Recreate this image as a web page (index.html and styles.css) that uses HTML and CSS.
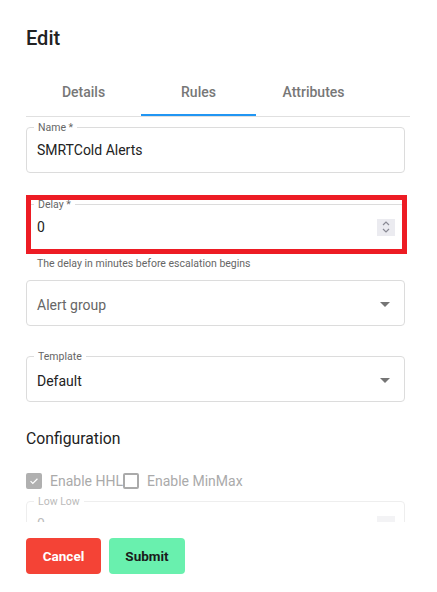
FILE: index.html
```html
<!DOCTYPE html>
<html lang="en">
<head>
  <meta charset="UTF-8">
  <title>Edit</title>
  <link rel="stylesheet" href="styles.css">
</head>
<body>
  <div class="dialog">
    <h2 class="dialog-title">Edit</h2>

    <div class="tabs">
      <div class="tab">Details</div>
      <div class="tab active">Rules</div>
      <div class="tab">Attributes</div>
    </div>

    <div class="dialog-content">
      <div class="field first">
        <span class="field-label">Name *</span>
        <span class="field-value">SMRTCold Alerts</span>
      </div>

      <div class="field delay">
        <span class="field-label">Delay *</span>
        <span class="field-value">0</span>
        <span class="spinner">
          <svg width="10" height="14" viewBox="0 0 10 14"><path d="M2 5l3-3 3 3M2 9l3 3 3-3" fill="none" stroke="#8a8a94" stroke-width="1.2"/></svg>
        </span>
        <span class="highlight"></span>
      </div>
      <div class="helper">The delay in minutes before escalation begins</div>

      <div class="field tight">
        <span class="field-value select placeholder">Alert group</span>
        <span class="arrow"></span>
      </div>

      <div class="field">
        <span class="field-label">Template</span>
        <span class="field-value select">Default</span>
        <span class="arrow"></span>
      </div>

      <h3 class="section-title">Configuration</h3>

      <div class="checks">
        <label class="check"><span class="box checked"><svg width="14" height="14" viewBox="0 0 14 14"><path d="M3 7.2l2.6 2.6L11 4.4" fill="none" stroke="#fff" stroke-width="1.4"/></svg></span>Enable HHL</label>
        <label class="check"><span class="box"></span>Enable MinMax</label>
      </div>

      <div class="field disabled">
        <span class="field-label">Low Low</span>
        <span class="field-value">0</span>
        <span class="spinner"></span>
      </div>
    </div>

    <div class="actions">
      <button class="btn cancel">Cancel</button>
      <button class="btn submit">Submit</button>
    </div>
  </div>
</body>
</html>
```

FILE: styles.css
```css
body {
  margin: 0;
  font-family: Roboto, "Noto Sans", sans-serif;
  background: #fff;
  color: #222;
}
.dialog {
  padding: 22px 27px 0 26px;
}
.dialog-title {
  margin: 0 0 14px;
  font-size: 20px;
  font-weight: 500;
  line-height: 32px;
  color: #222;
}
.tabs {
  display: flex;
  height: 48px;
  border-bottom: 1px solid #e0e0e0;
}
.tab {
  width: 115px;
  display: flex;
  align-items: center;
  justify-content: center;
  font-size: 14px;
  font-weight: 500;
  color: #777;
  box-sizing: border-box;
}
.tab.active {
  border-bottom: 2px solid #2196f3;
  padding-top: 2px;
}
.dialog-content {
  height: 405px;
  overflow: hidden;
  padding-right: 5px;
}
.field {
  position: relative;
  height: 46px;
  box-sizing: border-box;
  border: 1px solid #dcdcdc;
  border-radius: 4px;
  padding: 0 10px;
  display: flex;
  align-items: center;
  margin-top: 30px;
}
.field.first { margin-top: 10px; }
.field.delay { margin-top: 31px; }
.field.tight { margin-top: 8px; }
.field-label {
  position: absolute;
  top: -6px;
  left: 7px;
  padding: 0 4px;
  background: #fff;
  font-size: 10.5px;
  line-height: 11px;
  color: #666;
}
.field-value {
  flex: 1;
  font-size: 14px;
  color: #222;
}
.field-value.select { padding-top: 3px; }
.field-value.placeholder { color: #666; }
.spinner {
  width: 18px;
  height: 17px;
  background: #ebebf0;
  display: flex;
  align-items: center;
  justify-content: center;
  margin-right: -1px;
}
.highlight {
  position: absolute;
  top: -10px;
  left: -1px;
  right: -3px;
  bottom: -5px;
  border: 5px solid #ed1c24;
  pointer-events: none;
}
.helper {
  margin: 6px 0 0 11px;
  font-size: 10.5px;
  line-height: 16px;
  color: #666;
}
.arrow {
  width: 0;
  height: 0;
  border-left: 5px solid transparent;
  border-right: 5px solid transparent;
  border-top: 5px solid #757575;
  margin: 2px 4px 0 0;
}
.section-title {
  margin: 23px 0 0;
  font-size: 15.75px;
  font-weight: 400;
  line-height: 28px;
  color: #222;
}
.checks {
  display: flex;
  margin-top: 19px;
  height: 18px;
  align-items: center;
}
.check {
  display: flex;
  align-items: center;
  font-size: 14px;
  color: #aaa;
}
.box {
  width: 16px;
  height: 16px;
  box-sizing: border-box;
  border: 2px solid #aaa;
  border-radius: 2px;
  margin-right: 8px;
  display: flex;
  align-items: center;
  justify-content: center;
}
.box.checked {
  background: #b0b0b0;
  border-color: #b0b0b0;
}
.field.disabled {
  margin-top: 11px;
  border-color: #eee;
}
.field.disabled .field-label,
.field.disabled .field-value { color: #bbb; }
.field.disabled .spinner { background: #f3f3f5; }
.actions {
  display: flex;
  gap: 8px;
  margin-top: 16px;
}
.btn {
  height: 36px;
  border: none;
  border-radius: 4px;
  font-family: Roboto, sans-serif;
  font-size: 13.5px;
  font-weight: 700;
  padding: 0;
}
.btn.cancel {
  width: 75px;
  background: #f44336;
  color: #fff;
}
.btn.submit {
  width: 76px;
  background: #69f0ae;
  color: #1b1b1b;
}
```
